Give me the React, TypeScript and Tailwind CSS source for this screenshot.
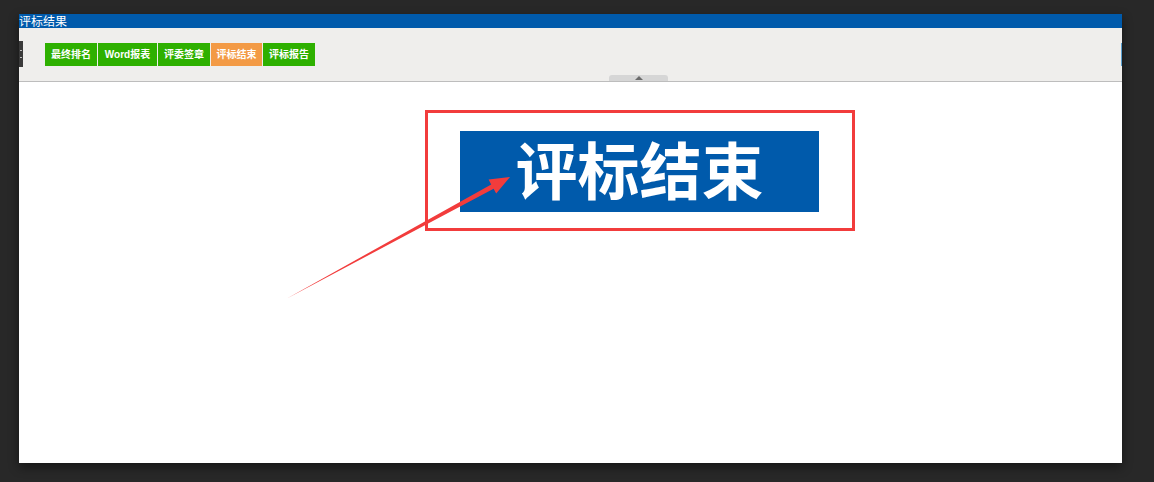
import React from 'react';

const cjk = { fontFamily: '"Noto Sans CJK SC", "Liberation Sans", sans-serif' };

const buttons = [
  { label: '最终排名', w: 'w-[52px]', active: false },
  { label: 'Word报表', w: 'w-[59px]', active: false },
  { label: '评委签章', w: 'w-[52px]', active: false },
  { label: '评标结束', w: 'w-[51px]', active: true },
  { label: '评标报告', w: 'w-[52px]', active: false },
];

const App = () => {
  return (
    <div className="w-[1154px] h-[482px] bg-[#282828] overflow-hidden pt-[14px] pl-[19px]" style={cjk}>
      <div className="w-[1103px] h-[449px] flex flex-col bg-white shadow-[0_4px_10px_rgba(0,0,0,0.45)]">
        {/* title bar */}
        <div className="h-[14px] bg-[#005aab]">
          <div className="text-[12px] leading-[13px] text-white">评标结果</div>
        </div>

        {/* toolbar */}
        <div className="h-[54px] bg-[#efeeec] border-b border-[#bdbdbd] flex flex-col">
          <div className="h-[47px] flex items-start">
            <div className="w-[4px] h-[26px] mt-[13px] bg-[#3a3a3a] flex items-center justify-center">
              <div className="w-[2px] h-[8px] border-y border-[#bbbbbb]" />
            </div>
            <div className="ml-[22px] mt-[15px] flex gap-[1px]">
              {buttons.map((b) => (
                <div
                  key={b.label}
                  className={`${b.w} h-[23px] flex items-center justify-center text-[10px] font-bold text-white ${
                    b.active ? 'bg-[#f39a45]' : 'bg-[#2eb000]'
                  }`}
                  style={{ fontFamily: '"Liberation Sans", "Noto Sans CJK SC", sans-serif' }}
                >
                  {b.label}
                </div>
              ))}
            </div>
            <div className="flex-1" />
            <div className="w-[1px] h-[23px] mt-[15px] bg-[#5aa0d0]" />
          </div>
          <div className="h-[6px] ml-[590px] w-[59px] bg-[#d6d6d6] rounded-t-[3px] flex items-center justify-center">
            <svg width="8" height="4" viewBox="0 0 8 4">
              <polygon points="0,4 8,4 4,0" fill="#6b6b6b" />
            </svg>
          </div>
        </div>

        {/* content */}
        <div className="relative flex-1 bg-white">
          <div className="ml-[406px] mt-[28px] w-[430px] h-[121px] border-[3px] border-[#f23c3c] pt-[18px] pl-[32px]">
            <div className="w-[359px] h-[81px] bg-[#005aab] flex items-center justify-center">
              <span className="text-[62px] leading-none font-semibold text-white -mt-[8px]" style={cjk}>
                评标结束
              </span>
            </div>
          </div>

          {/* annotation arrow */}
          <svg className="absolute left-0 top-0 pointer-events-none" width="1103" height="381" viewBox="19 82 1103 381">
            <polygon
              points="286,299 491.2,184.4 488.6,179.6 510,177 496.2,193.6 493.6,188.8"
              fill="#f23c3c"
            />
          </svg>
        </div>
      </div>
    </div>
  );
};

export default App;
